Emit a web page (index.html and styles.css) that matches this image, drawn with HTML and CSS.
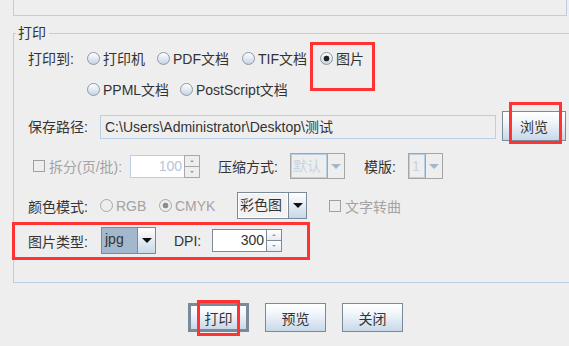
FILE: index.html
```html
<!DOCTYPE html>
<html lang="zh">
<head>
<meta charset="utf-8">
<title>打印</title>
<link rel="stylesheet" href="styles.css">
</head>
<body>
<div class="topbox"></div>
<fieldset class="group">
  <legend>打印</legend>
  <div class="row r1">
    <span class="lbl w59">打印到:</span>
    <label class="radio w70"><span class="rb"></span>打印机</label>
    <label class="radio w85"><span class="rb"></span>PDF文档</label>
    <label class="radio w78"><span class="rb"></span>TIF文档</label>
    <label class="radio"><span class="rb on"></span>图片</label>
  </div>
  <div class="row r2">
    <span class="lbl w59"></span>
    <label class="radio w93"><span class="rb"></span>PPML文档</label>
    <label class="radio"><span class="rb"></span>PostScript文档</label>
  </div>
  <div class="row r3">
    <span class="lbl w72">保存路径:</span>
    <div class="field path">C:\Users\Administrator\Desktop\测试</div>
    <button class="btn browse">浏览</button>
  </div>
  <div class="row r4">
    <label class="check dis split"><span class="cb"></span>拆分(页/批):</label>
    <div class="spin dis s100"><div class="spin-f">100</div><div class="spin-b"><span class="up"></span><span class="dn"></span></div></div>
    <span class="lbl compress">压缩方式:</span>
    <div class="combo dis c-def"><div class="combo-t">默认</div><div class="combo-a"><span class="tri"></span></div></div>
    <span class="lbl tpl">模版:</span>
    <div class="combo dis c-one"><div class="combo-t">1</div><div class="combo-a"><span class="tri"></span></div></div>
  </div>
  <div class="row r5">
    <span class="lbl w72">颜色模式:</span>
    <label class="radio dis w59"><span class="rb"></span>RGB</label>
    <label class="radio dis w78"><span class="rb on"></span>CMYK</label>
    <div class="combo c-color"><div class="combo-t">彩色图</div><div class="combo-a"><span class="tri"></span></div></div>
    <label class="check dis wordcurve"><span class="cb"></span>文字转曲</label>
  </div>
  <div class="row r6">
    <span class="lbl w73">图片类型:</span>
    <div class="combo c-jpg"><div class="combo-t">jpg</div><div class="combo-a"><span class="tri"></span></div></div>
    <span class="lbl dpi">DPI:</span>
    <div class="spin s300"><div class="spin-f">300</div><div class="spin-b"><span class="up"></span><span class="dn"></span></div></div>
  </div>
</fieldset>
<div class="actions">
  <button class="btn act default">打印</button>
  <button class="btn act">预览</button>
  <button class="btn act">关闭</button>
</div>

<div class="mark m1"></div>
<div class="mark m2"></div>
<div class="mark m3"></div>
<div class="mark m4"></div>
</body>
</html>
```
FILE: styles.css
```css
* { box-sizing: border-box; }
html, body { margin: 0; padding: 0; }
body {
  background: #eeeeee;
  font-family: "Liberation Sans", "Noto Sans CJK SC", sans-serif;
  font-size: 14px;
  color: #333333;
  width: 569px;
  height: 346px;
  overflow: hidden;
  position: relative;
}
.topbox {
  margin-left: 13px;
  width: 554px;
  height: 16px;
  border: 1px solid #b8cfe5;
  border-top: 0;
}
.group {
  margin: 8px 0 0 13px;
  width: 556px;
  min-width: 0;
  border: 1px solid #b8cfe5;
  border-right: 0;
  padding: 4px 0 28px 0;
}
.group legend {
  margin-left: 2px;
  padding: 0 3px 0 2px;
  line-height: 18px;
  font-size: 14px;
  color: #333;
}
.row {
  display: flex;
  align-items: center;
  padding-left: 14px;
  white-space: nowrap;
}
.r1 { height: 24px; }
.r2 { height: 24px; margin-top: 7px; }
.r3 { height: 30px; margin-top: 10px; }
.r4 { height: 26px; margin-top: 12px; }
.r5 { height: 27px; margin-top: 13px; }
.r6 { height: 27px; margin-top: 8px; }

.lbl { flex: none; }
.w59 { width: 59px; }
.w70 { width: 70px; }
.w72 { width: 72px; }
.w73 { width: 73px; }
.w78 { width: 78px; }
.w85 { width: 85px; }
.w93 { width: 93px; }

.radio { display: flex; align-items: center; flex: none; }
.rb {
  width: 13px; height: 13px;
  border-radius: 50%;
  border: 1px solid #8a99a8;
  background: linear-gradient(#ffffff, #c6d4e2);
  margin-right: 3px;
  flex: none;
}
.rb.on {
  background: radial-gradient(circle at 50% 50%, #222 0 2.6px, transparent 3.2px), linear-gradient(#ffffff, #c6d4e2);
}
.radio.dis { color: #a3a3a3; }
.radio.dis .rb { border-color: #a8a8a8; background: transparent; }
.radio.dis .rb.on { background: radial-gradient(circle at 50% 50%, #8d8d8d 0 2.6px, transparent 3.2px); }

.field {
  height: 24px;
  border: 1px solid #b8cfe5;
  background: #eeeeee;
  padding: 0 4px;
  line-height: 22px;
  flex: none;
}
.path { width: 396px; align-self: flex-start; margin-top: 4px; color: #333; }

.btn {
  font-family: "Noto Sans CJK SC", "Liberation Sans", sans-serif;
  font-size: 14px;
  color: #333;
  border: 1px solid #7a8a99;
  background: linear-gradient(#ffffff 0%, #f4f8fc 30%, #c8d8e8 100%);
  padding: 0;
  margin: 0;
  flex: none;
}
.browse { width: 64px; height: 30px; margin-left: 6px; }

.check { display: flex; align-items: center; flex: none; }
.check.dis { color: #a3a3a3; }
.cb { width: 12px; height: 12px; border: 1px solid #a0a0a0; margin-right: 4px; flex: none; }
.split { margin-left: 5px; width: 96px; }

.spin { display: flex; height: 23px; flex: none; }
.spin-f {
  height: 100%;
  text-align: right;
  padding-right: 2px;
  line-height: 21px;
  background: #fff;
}
.spin-b { width: 16px; display: flex; flex-direction: column; }
.spin-b span { flex: 1; position: relative; border: 1px solid #a0a0a0; background: linear-gradient(#fff, #e4ebf2); }
.spin-b span.dn { border-top: 0; }
.spin-b span::after {
  content: ""; position: absolute; left: 5px; top: 4px;
  border-left: 2px solid transparent; border-right: 2px solid transparent;
}
.spin-b .up::after { border-bottom: 2px solid #999; }
.spin-b .dn::after { border-top: 2px solid #999; top: 4px; }
.s100 .spin-f { width: 54px; border: 1px solid #b8cfe5; border-right: 0; color: #b4c6d8; }
.s100 .spin-b span { border-color: #a8a8a8; background: #eeeeee; }
.s100 { margin-left: 1px; }
.s300 .spin-f { width: 54px; border: 1px solid #7a8a99; border-right: 0; color: #333; }
.s300 .spin-b span { border-color: #7a8a99; }

.compress { margin-left: 18px; width: 72px; }
.tpl { margin-left: 19px; width: 44px; }

.combo { display: flex; border: 1px solid #7a8a99; flex: none; }
.combo-t { height: 100%; line-height: 23px; padding-left: 1px; }
.combo-a {
  width: 20px; height: 100%;
  border-left: 1px solid #7a8a99;
  background: linear-gradient(#ffffff, #c8d8e8);
  display: flex; align-items: center; justify-content: center;
}
.tri {
  width: 0; height: 0;
  border-left: 5px solid transparent; border-right: 5px solid transparent;
  border-top: 5px solid #111;
}
.combo.dis { border-color: #a5a5a5; height: 26px; }
.combo.dis .combo-t { border: 1px solid #b8cfe5; color: #c6d4e2; line-height: 22px; }
.combo.dis .combo-a { border-left: 1px solid #a5a5a5; background: #eeeeee; }
.combo.dis .tri { border-top-color: #a3b8cc; }
.c-def { width: 55px; }
.c-def .combo-t { width: 36px; }
.c-def .combo-a { flex: 1; }
.c-one { width: 35px; }
.c-one .combo-t { width: 16px; padding-left: 2px; }
.c-one .combo-a { flex: 1; }

.c-color { width: 70px; height: 27px; margin-left: 0; }
.c-color .combo-t { width: 50px; background: #f2f2f2; border: 1px solid #ffffff; }
.c-color .combo-a { flex: 1; }
.wordcurve { margin-left: 22px; }

.c-jpg { width: 55px; height: 27px; }
.c-jpg .combo-t { width: 35px; background: #a3b8cc; color: #333; padding-left: 3px; }
.c-jpg .combo-a { flex: 1; }
.dpi { margin-left: 18px; width: 38px; }

.actions { display: flex; margin: 20px 0 0 188px; gap: 16px; }
.act { width: 61px; height: 29px; }
.act.default { border: 3px solid #7a8a99; }

.mark { position: absolute; border: 3px solid #ff3333; }
.m1 { left: 310px; top: 42px; width: 65px; height: 49px; }
.m2 { left: 509px; top: 102px; width: 53px; height: 42px; }
.m3 { left: 12px; top: 222px; width: 298px; height: 38px; }
.m4 { left: 197px; top: 300px; width: 43px; height: 36px; }
```
